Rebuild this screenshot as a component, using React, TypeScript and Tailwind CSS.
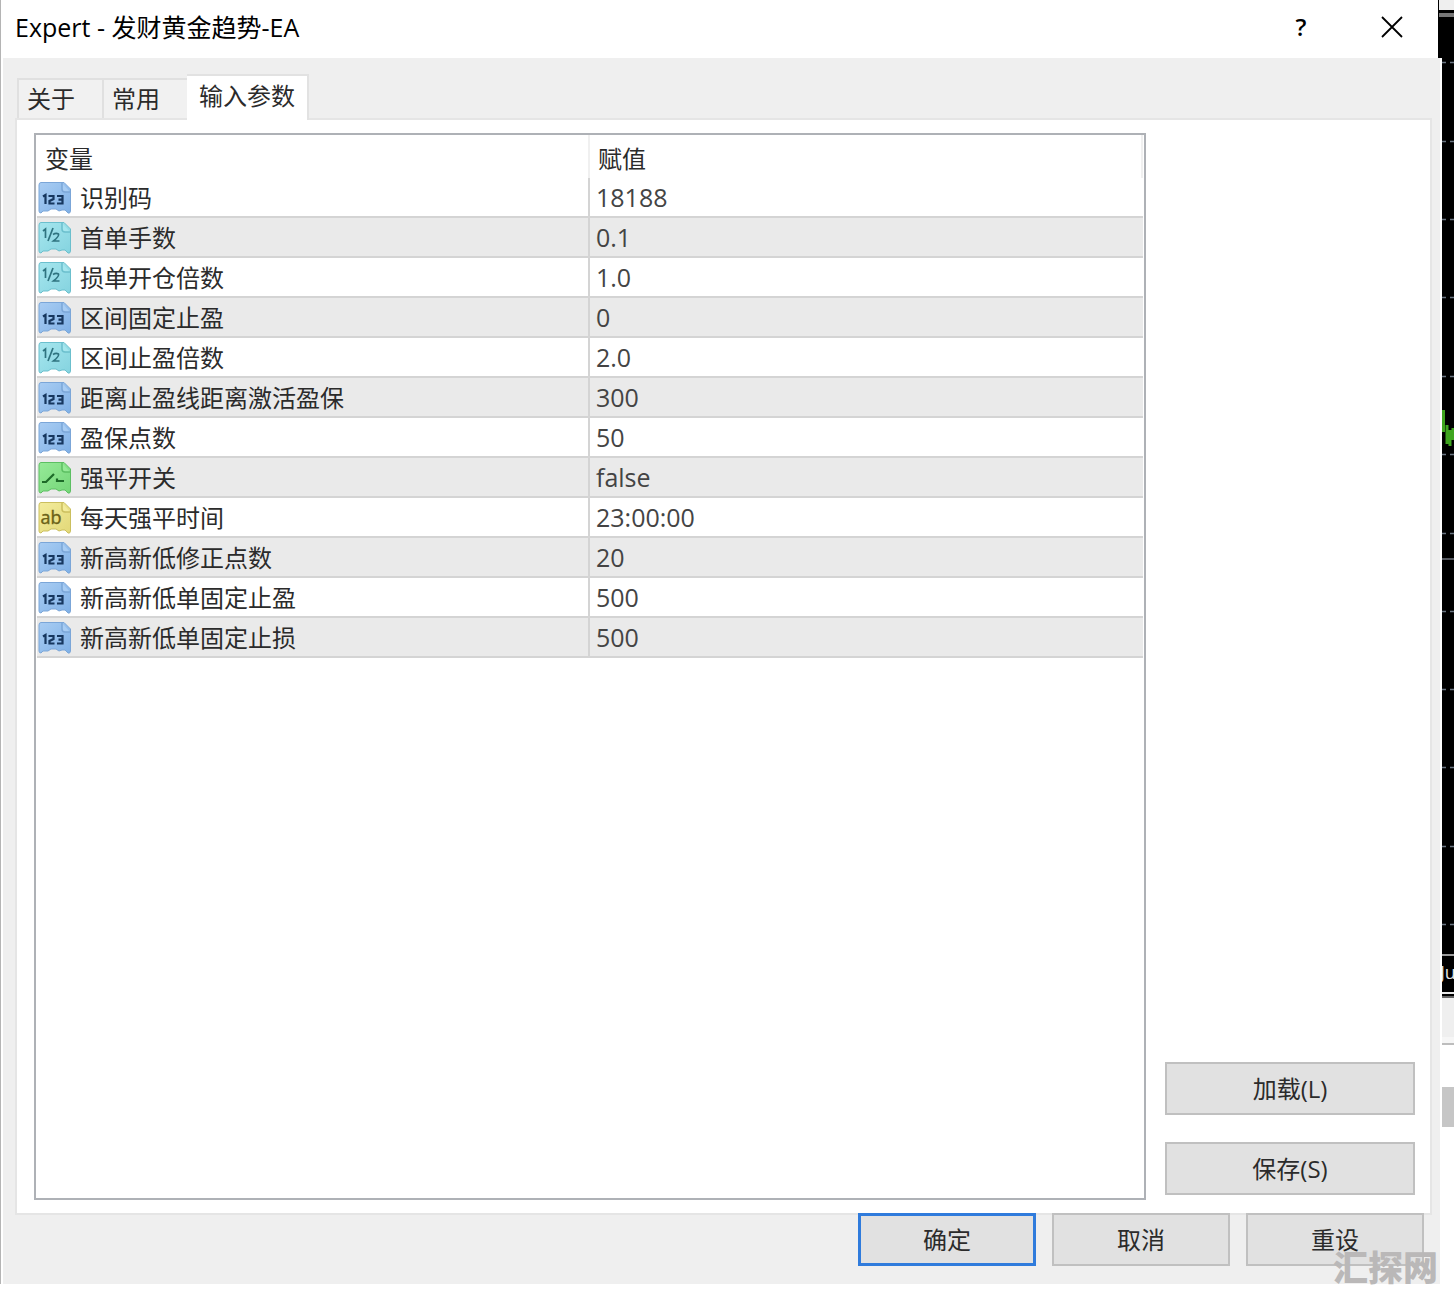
import { useState } from 'react'

type ParamKind = 'int' | 'double' | 'bool' | 'string'

interface Param {
  name: string
  value: string
  kind: ParamKind
}

const TABS = ['关于', '常用', '输入参数']

const PARAMS: Param[] = [
  { name: '识别码', value: '18188', kind: 'int' },
  { name: '首单手数', value: '0.1', kind: 'double' },
  { name: '损单开仓倍数', value: '1.0', kind: 'double' },
  { name: '区间固定止盈', value: '0', kind: 'int' },
  { name: '区间止盈倍数', value: '2.0', kind: 'double' },
  { name: '距离止盈线距离激活盈保', value: '300', kind: 'int' },
  { name: '盈保点数', value: '50', kind: 'int' },
  { name: '强平开关', value: 'false', kind: 'bool' },
  { name: '每天强平时间', value: '23:00:00', kind: 'string' },
  { name: '新高新低修正点数', value: '20', kind: 'int' },
  { name: '新高新低单固定止盈', value: '500', kind: 'int' },
  { name: '新高新低单固定止损', value: '500', kind: 'int' }
]

const KIND_COLORS: Record<ParamKind, { light: string; base: string; edge: string; ink: string }> = {
  int: { light: '#a9cdf3', base: '#7fb0e6', edge: '#7ba6d8', ink: '#17375f' },
  double: { light: '#a6e6ee', base: '#84d3df', edge: '#6bbfcd', ink: '#2f7480' },
  bool: { light: '#96ea98', base: '#74d678', edge: '#5cbf62', ink: '#1d6a28' },
  string: { light: '#f3ec9c', base: '#e2d878', edge: '#cbbf5e', ink: '#6b6218' }
}

// Page-shaped badge with a folded corner and a torn bottom edge.
function KindIcon({ kind }: { kind: ParamKind }) {
  const c = KIND_COLORS[kind]
  return (
    <svg width="34" height="34" viewBox="0 0 34 34" className="block shrink-0" aria-hidden="true">
      <defs>
        <linearGradient id={`fill-${kind}`} x1="0" y1="0" x2="1" y2="1">
          <stop offset="0" stopColor={c.light} />
          <stop offset="1" stopColor={c.base} />
        </linearGradient>
      </defs>
      <path
        d="M3 1.500H26L32.500 8V30Q32 33 30 32L27 29H24L21 30L18 28H13L10 30H5L3 32Q1 32 1 30V4Q1 1.500 3 1.500Z"
        fill={`url(#fill-${kind})`}
        stroke={c.edge}
        strokeWidth="1"
      />
      <path d="M24 2V8Q24 11 27 11H32" fill={c.light} stroke={c.edge} strokeWidth="1.5" />
      {kind === 'int' && (
        <g fill="none" stroke={c.ink} strokeWidth="2.2">
          <path d="M5 15.500L7.500 14V23" />
          <path d="M10.500 15H15.500V18L11.500 20V22.500H16.500" />
          <path d="M19 15H24.500V22.500H19M20.500 18.700H24.500" />
        </g>
      )}
      {kind === 'double' && (
        <g fill="none" stroke={c.ink} strokeWidth="1.7">
          <path d="M5 10L7.500 8V17" />
          <path d="M15 7L10 20" />
          <path d="M15 13.500Q18 11.500 20.500 13Q21.500 15 15.500 20H21.500" />
        </g>
      )}
      {kind === 'bool' && (
        <g fill="none" stroke={c.ink} strokeWidth="2.2">
          <path d="M4 21H8L16 13" />
          <path d="M18 20H26M19 17.500V21" />
        </g>
      )}
      {kind === 'string' && (
        <text x="13" y="23" textAnchor="middle" fontSize="18" fontFamily="Open Sans" fill={c.ink} stroke={c.ink} strokeWidth="0.4">
          ab
        </text>
      )}
    </svg>
  )
}

const GRID_LINES = [4, 83, 161, 239, 318, 396, 475, 553, 631, 709, 788, 866]

// Sliver of the chart window that stays visible behind the dialog.
function ChartEdge() {
  return (
    <svg width="12" height="940" viewBox="0 0 12 940" className="block" aria-hidden="true">
      <rect width="12" height="940" fill="#000" />
      {GRID_LINES.map((y) => (
        <path key={y} d={`M0 ${y + 0.5}H4M8 ${y + 0.5}H12`} stroke="#6b7682" strokeWidth="1.5" />
      ))}
      <path d="M0 501H12" stroke="#55585f" strokeWidth="2" />
      <path d="M1.500 352V374M5 367V386M8 372V388M11 370V382" stroke="#3fa51f" strokeWidth="3" />
      <path d="M0 897H12" stroke="#d0d0d0" strokeWidth="1.5" />
      <text x="-2" y="921" fontSize="18" fontFamily="Open Sans" fill="#e5e5e5">
        Ju
      </text>
      <path d="M0 935H12" stroke="#e8e8e8" strokeWidth="2" />
      <path d="M0 939H12" stroke="#666" strokeWidth="2" />
    </svg>
  )
}

function PushButton({ label, primary = false }: { label: string; primary?: boolean }) {
  return (
    <button
      type="button"
      className={
        primary
          ? 'h-[53px] w-full border-3 border-[#2f7bdc] bg-[#e1e1e1] hover:bg-[#e5f1fb]'
          : 'h-[53px] w-full border-2 border-[#c0c0c0] bg-[#e1e1e1] hover:bg-[#e5f1fb]'
      }
    >
      {label}
    </button>
  )
}

export default function App() {
  const [tab, setTab] = useState(2)

  return (
    <div className="relative flex min-h-screen flex-col overflow-hidden bg-white pb-2 font-['Open_Sans','Noto_Sans_CJK_SC',sans-serif] text-2xl leading-8 text-[#2b2b2b]">
      <div className="flex h-[58px]">
        <header className="flex flex-1 items-center border-l border-[#b4b4b4] pl-[14px] text-black">
          <h1 className="flex-1 pb-1 text-[25px]">Expert - 发财黄金趋势-EA</h1>
          <button type="button" aria-label="帮助" className="flex h-full w-[90px] items-center justify-center pb-1 font-semibold">
            ?
          </button>
          <button type="button" aria-label="关闭" className="flex h-full w-[92px] items-center justify-center pb-1">
            <svg width="22" height="22" viewBox="0 0 22 22" aria-hidden="true">
              <path d="M1 1L21 21M21 1L1 21" stroke="#000" strokeWidth="1.8" />
            </svg>
          </button>
        </header>
        <div className="flex w-4 flex-col border-l border-black bg-black">
          <div className="h-[10px] bg-[#efefef]" />
          <div className="mt-[3px] h-1 bg-[#777]" />
        </div>
      </div>

      <div className="flex flex-1">
        <main className="flex flex-1 flex-col border-l border-[#b4b4b4]">
          <div className="flex flex-1 flex-col border-x-2 border-white bg-[#efefef] pt-4 pb-[18px]">
            <div role="tablist" className="relative flex items-end pl-[14px]">
              {TABS.map((name, i) => (
                <button
                  key={name}
                  type="button"
                  role="tab"
                  aria-selected={i === tab}
                  onClick={() => setTab(i)}
                  className={
                    i === tab
                      ? '-mb-[2px] h-[46px] border-t-2 border-r-2 border-[#e2e2e2] bg-white px-3 pb-1'
                      : 'h-10 border-t-2 border-l-2 border-[#e0e0e0] bg-[#f1f1f1] pr-[27px] pl-2'
                  }
                >
                  {name}
                </button>
              ))}
            </div>

            <div className="mr-2 ml-3 flex flex-1 gap-[19px] border-2 border-[#e5e5e5] bg-white px-[15px] py-[13px]">
              <div className="ml-[2px] flex-1 border-2 border-[#aeb1b6] px-px">
                <table className="w-full table-fixed border-separate border-spacing-0">
                  <thead>
                    <tr className="h-[43px] text-left">
                      <th className="w-1/2 border-r-2 border-[#f0f0f0] p-0 pt-1 pl-2 font-normal">变量</th>
                      <th className="border-r-2 border-[#f0f0f0] p-0 pt-1 pl-2 font-normal">赋值</th>
                    </tr>
                  </thead>
                  <tbody>
                    {PARAMS.map((p) => (
                      <tr key={p.name} className="h-10 even:bg-[#eaeaea]">
                        <td className="border-r-2 border-b-2 border-[#d4d4d4] p-0 pt-[2px] pl-px">
                          <div className="flex items-center gap-2">
                            <KindIcon kind={p.kind} />
                            <span>{p.name}</span>
                          </div>
                        </td>
                        <td className="border-b-2 border-[#d4d4d4] p-0 pl-[6px] text-[25px] text-[#444]">{p.value}</td>
                      </tr>
                    ))}
                  </tbody>
                </table>
              </div>
              <div className="flex w-[250px] flex-col justify-end gap-[27px] pb-[5px]">
                <PushButton label="加载(L)" />
                <PushButton label="保存(S)" />
              </div>
            </div>

            <div className="-mt-[2px] grid grid-cols-[178px_178px_178px] justify-end gap-4 pr-4">
              <PushButton label="确定" primary />
              <PushButton label="取消" />
              <PushButton label="重设" />
            </div>
          </div>
        </main>
        <aside className="flex w-3 flex-col">
          <ChartEdge />
          <div className="h-[39px] bg-[#efefef]" />
          <div className="h-2 border-b-2 border-[#bdbdbd] bg-[#f6f6f6]" />
          <div className="mt-[42px] h-10 bg-[#c6c6c6]" />
        </aside>
      </div>

      <span className="pointer-events-none absolute right-4 bottom-1 text-[35px] leading-10 font-black text-[#bab8b8]">
        汇探网
      </span>
    </div>
  )
}
